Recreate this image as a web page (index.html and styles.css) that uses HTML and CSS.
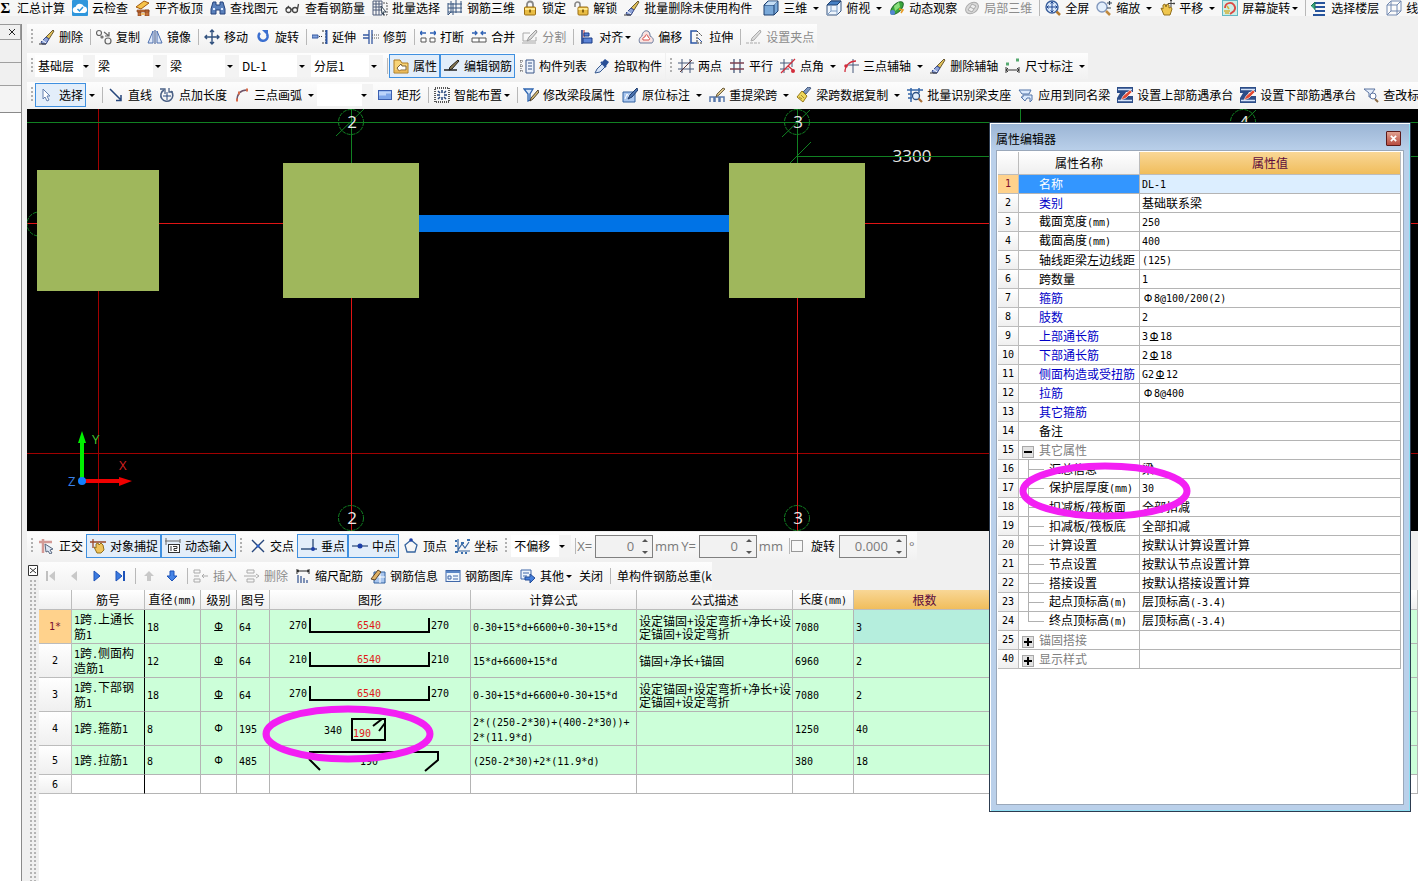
FILE: index.html
```html
<!DOCTYPE html>
<html lang="zh-CN">
<head>
<meta charset="utf-8">
<title>钢筋算量</title>
<link rel="stylesheet" href="styles.css">
</head>
<body>
<svg class="sprite" aria-hidden="true">
  <defs>
    <linearGradient id="g-blue" x1="0" y1="0" x2="1" y2="1"><stop offset="0" stop-color="#c4dcff"/><stop offset="1" stop-color="#3b6fd0"/></linearGradient>
    <linearGradient id="g-gold" x1="0" y1="0" x2="0" y2="1"><stop offset="0" stop-color="#ffe680"/><stop offset="1" stop-color="#c8921c"/></linearGradient>
    <symbol id="i-cloud" viewBox="0 0 16 16"><rect width="16" height="16" rx="1" fill="#2f96dc"/><path d="M4 13a3 3 0 0 1-.5-6A4.500 4.500 0 0 1 12 6.500 3.300 3.300 0 0 1 12.500 13z" fill="#fff"/><path d="M5.500 9l2 2 3.500-4" fill="none" stroke="#2f96dc" stroke-width="1.500"/></symbol>
    <symbol id="i-slab" viewBox="0 0 16 16"><path d="M1 7l8-6 5 2-8 6z" fill="#f6c34a" stroke="#a35a10"/><path d="M2 10h12v2H2zM3 12h3v4H3zM10 10h4v6h-4z" fill="#c4703a" stroke="#803c18" stroke-width=".6"/><path d="M6 13h4v2H6z" fill="#f0c070"/></symbol>
    <symbol id="i-find" viewBox="0 0 16 16"><path d="M3 2h3v3h4V2h3l2 7v5h-5v-4H6v4H1V9z" fill="#5a80bb" stroke="#24427c"/><path d="M3 9h2M11 9h2" stroke="#dce8ff" stroke-width="2"/></symbol>
    <symbol id="i-glasses" viewBox="0 0 16 16"><g fill="none" stroke="#444" stroke-width="1.300"><circle cx="3.500" cy="10" r="2.500"/><circle cx="10" cy="10" r="2.500"/><path d="M6 9.500h1.500M1 9l3-3M12.500 9l1-5"/></g></symbol>
    <symbol id="i-batch" viewBox="0 0 16 16"><path d="M1 1h9v14H1zM1 4h9M1 7h9M1 10h9M4 1v14M7 1v14" fill="none" stroke="#4c5a78"/><path d="M11 3h4v12h-5" fill="none" stroke="#555" stroke-dasharray="2 1"/><path d="M9 6l5 6h-3l1 3-2-2z" fill="#fff" stroke="#345"/></symbol>
    <symbol id="i-frame" viewBox="0 0 16 16"><path d="M4 1v12M9 0v13M14 1v12M1 4h14M1 8h14M1 12h14M1 3v12M1 15l3-3M6 3v12" fill="none" stroke="#36547f"/></symbol>
    <symbol id="i-lock" viewBox="0 0 16 16"><path d="M5 7V4.500a3 3 0 0 1 6 0V7" fill="none" stroke="#888" stroke-width="1.800"/><rect x="2.500" y="7" width="11" height="8" rx="1" fill="#e8bc44" stroke="#9a6c10"/><path d="M3 9h10" stroke="#ffe88c" stroke-width="2"/><path d="M8 9.500v3" stroke="#6a4800" stroke-width="1.500"/></symbol>
    <symbol id="i-unlock" viewBox="0 0 16 16"><path d="M2 7V4.500a2.500 2.500 0 0 1 5 0V8" fill="none" stroke="#888" stroke-width="1.600"/><rect x="5" y="7" width="10" height="8" rx="1" fill="#e8bc44" stroke="#9a6c10"/><path d="M5.500 9h9" stroke="#ffe88c" stroke-width="2"/><path d="M10 9.500v3" stroke="#6a4800" stroke-width="1.500"/></symbol>
    <symbol id="i-eraser" viewBox="0 0 16 16"><path d="M14 1l1 1-5 8-3-2z" fill="#e0c15a" stroke="#6b5a30"/><path d="M7 8l3 2-3 5H3l-1-2z" fill="#8fa4d8" stroke="#3b4d8c"/><path d="M3 11l4 3" stroke="#fff"/><path d="M0 15h7" stroke="#333"/></symbol>
    <symbol id="i-cube" viewBox="0 0 16 16"><path d="M1 5l4-4h10v10l-4 4H1z" fill="#7aa9d9" stroke="#1d3f6e"/><path d="M1 5h10v10M11 5l4-4" fill="none" stroke="#1d3f6e"/><path d="M2 5l3.500-3.500h9L11 5z" fill="#c6def5"/></symbol>
    <symbol id="i-top" viewBox="0 0 16 16"><path d="M1 5l4-4h10v10l-4 4H1z" fill="#eef5fc" stroke="#36547f"/><path d="M1 5l4-4h10l-4 4z" fill="#4680c4" stroke="#1d3f6e"/><path d="M11 5v10M5 5v6h6M5 11l-4 4" fill="none" stroke="#7d9cc4"/></symbol>
    <symbol id="i-orbit" viewBox="0 0 16 16"><ellipse cx="8" cy="8" rx="8" ry="4" transform="rotate(-45 8 8)" fill="#3aa63c" stroke="#226a2b"/><path d="M5 6l5-4 1 5-5 4z" fill="#8ae07a"/><circle cx="3.500" cy="12.500" r="2.500" fill="#5585d2"/><path d="M10 9l4 1-2 3" fill="none" stroke="#e89a20" stroke-width="1.500"/></symbol>
    <symbol id="i-orbit-off" viewBox="0 0 16 16"><ellipse cx="8" cy="8" rx="7" ry="5" transform="rotate(-35 8 8)" fill="#d8d8d8" stroke="#aaa"/><path d="M4 10l4-6 4 2-4 6zM6 7l4 2" fill="#eee" stroke="#aaa"/></symbol>
    <symbol id="i-fit" viewBox="0 0 16 16"><circle cx="7" cy="7" r="6" fill="#dceafc" stroke="#3b5f9c" stroke-width="1.400"/><path d="M7 2v10M2 7h10M5.500 3.500L7 2l1.500 1.500M5.500 10.500L7 12l1.500-1.500M3.500 5.500L2 7l1.500 1.500M10.500 5.500L12 7l-1.500 1.500" fill="none" stroke="#1d4590"/><path d="M11.500 11.500l3.500 3.500" stroke="#b57a30" stroke-width="2.500"/></symbol>
    <symbol id="i-zoom" viewBox="0 0 16 16"><circle cx="6" cy="7" r="5" fill="#e3effc" stroke="#8298bd" stroke-width="1.400"/><path d="M10 11l4 4" stroke="#c08a40" stroke-width="2.500"/><path d="M11 3h5M13.500 1v4M11 8h4" stroke="#345" stroke-width="1.200"/></symbol>
    <symbol id="i-pan" viewBox="0 0 16 16"><path d="M2 8l2 1V5l2-1 1 3 1-3 2 1v3l2-1 1 2-2 6H5z" fill="#efc64e" stroke="#93701c"/><path d="M12 0v7M9 3.500h7M11 1l1-1 1 1M15 2.500l1 1-1 1" fill="none" stroke="#444"/></symbol>
    <symbol id="i-rotview" viewBox="0 0 16 16"><rect x=".5" y=".5" width="15" height="15" fill="#cdeee6" stroke="#62b8c4"/><path d="M3 8a5 5 0 0 1 9-3 5 5 0 0 1 0 6l-4 3" fill="none" stroke="#db4942" stroke-width="1.800"/><path d="M2 11h6M3 13h4M5 6l2 3" stroke="#d2b33c" stroke-width="1.500"/></symbol>
    <symbol id="i-floors" viewBox="0 0 16 16"><path d="M4 3h10M4 7h10M4 11h10M2 15h12" stroke="#27549c" stroke-width="2"/><path d="M0 6l4-4v8" fill="#38a67c" stroke="#1c7252"/></symbol>
    <symbol id="i-wire" viewBox="0 0 16 16"><path d="M1 5l4-4h10v10l-4 4H1zM1 5h10v10M11 5l4-4M5 1v10h10M5 11l-4 4" fill="#fff" fill-opacity=".5" stroke="#7389b0"/></symbol>
    <symbol id="i-copy" viewBox="0 0 16 16"><g fill="none" stroke="#666" stroke-width="1.200"><circle cx="3" cy="4" r="2.500"/><circle cx="12" cy="12" r="3"/><circle cx="6" cy="8" r="1"/><path d="M8 3l5 4M13 3v4H9"/></g></symbol>
    <symbol id="i-mirror" viewBox="0 0 16 16"><path d="M6 2v12H1zM10 2v12h5z" fill="#dfe9f9" stroke="#4c6fae"/><path d="M8 1v14" stroke="#2d4b86"/></symbol>
    <symbol id="i-move" viewBox="0 0 16 16"><path d="M8 1v14M1 8h14M6 3l2-2 2 2M6 13l2 2 2-2M3 6L1 8l2 2M13 6l2 2-2 2" fill="none" stroke="#31517e" stroke-width="1.400"/></symbol>
    <symbol id="i-rotate" viewBox="0 0 16 16"><path d="M5 4a4.500 4.500 0 1 0 7 1" fill="none" stroke="#3b6fd0" stroke-width="2.600"/><path d="M7 1h6v6z" fill="#3b6fd0"/></symbol>
    <symbol id="i-extend" viewBox="0 0 16 16"><path d="M0 6h6v3H0z" fill="#86a5dc" stroke="#3558a0"/><path d="M7 7.500h4" stroke="#333" stroke-dasharray="1 1"/><path d="M10 2h4v12h-4" fill="none" stroke="#333" stroke-dasharray="2 1"/><path d="M14.500 1v14" stroke="#2b55a5" stroke-width="2"/></symbol>
    <symbol id="i-trim" viewBox="0 0 16 16"><path d="M0 6h6M0 9h6M6 1v14M9 1v14" stroke="#3558a0" stroke-width="1.300"/><path d="M9 6h7M9 9h7" stroke="#555" stroke-dasharray="1 1"/></symbol>
    <symbol id="i-break" viewBox="0 0 16 16"><path d="M1 9h5v4H1zM15 9h-5v4h5z" fill="#fff" stroke="#555"/><path d="M0 4h6M2 2L0 4l2 2M10 4h6M14 2l2 2-2 2" fill="none" stroke="#2f62b5" stroke-width="1.300"/></symbol>
    <symbol id="i-join" viewBox="0 0 16 16"><path d="M1 9h14v4H1zM8 9v4" fill="#fff" stroke="#555"/><path d="M1 4h5M4 2l2 2-2 2M10 4h5M12 2l-2 2 2 2" fill="none" stroke="#2f62b5" stroke-width="1.300"/></symbol>
    <symbol id="i-split" viewBox="0 0 16 16"><path d="M1 4h7M1 4v8h13V8M0 14h14" fill="none" stroke="#aaa"/><path d="M14 1l-7 7-2 4 4-2 6-7z" fill="#ddd" stroke="#999"/></symbol>
    <symbol id="i-align" viewBox="0 0 16 16"><path d="M3 1v14" stroke="#193a86" stroke-width="1.500"/><path d="M5 1v7" stroke="#c02828"/><path d="M5 4h5v3H5zM4 9h9v5H4z" fill="#5d84d6" stroke="#193a86"/></symbol>
    <symbol id="i-offset" viewBox="0 0 16 16"><path d="M2 14c-2-3 0-6 2-7 0-4 4-7 7-4 1 1 1 3 1 4 4 2 4 5 2 7z" fill="#f8e2e0" stroke="#66789c"/><path d="M5 11c-1-2 1-3 2-3 0-3 3-3 3 0 2 1 2 2 1 3z" fill="#fff" stroke="#d8504c"/></symbol>
    <symbol id="i-stretch" viewBox="0 0 16 16"><path d="M8 2H2v12h6" fill="none" stroke="#2b55a5" stroke-width="1.500"/><path d="M8 2l5 5M8 14h6M8 5v9" fill="none" stroke="#333" stroke-dasharray="2 1"/><path d="M9 9l4 4" stroke="#2b55a5"/></symbol>
    <symbol id="i-grip-off" viewBox="0 0 16 16"><path d="M14 1l1 2-7 8-3 1 1-3z" fill="#ddd" stroke="#aaa"/><path d="M0 14h14" stroke="#aaa" stroke-dasharray="3 1"/></symbol>
    <symbol id="i-prop" viewBox="0 0 16 16"><path d="M1 2h6l2 3h6v10H1z" fill="#f8d477" stroke="#ad7b22"/><path d="M4 10l4-4 1 2h4v4H8l-2 1z" fill="#fff" stroke="#7b6238"/><path d="M2 13h12" stroke="#e0a040"/></symbol>
    <symbol id="i-rebar" viewBox="0 0 16 16"><path d="M0 12h13" stroke="#222" stroke-width="1.500"/><path d="M14 2l1 1-7 8-3 1 1-3z" fill="#8a7a50" stroke="#222"/></symbol>
    <symbol id="i-list" viewBox="0 0 16 16"><path d="M7 2h8v13H7z" fill="#edf3fc" stroke="#3b5788"/><path d="M9 5h4M9 8h4M9 11h4" stroke="#3b5788"/><path d="M2 2v12M1 3h3M1 8h3M1 13h3" stroke="#555" stroke-dasharray="1 1"/></symbol>
    <symbol id="i-picker" viewBox="0 0 16 16"><path d="M1 15l2-4 6-6 3 3-6 6z" fill="#d6e4f8" stroke="#37598f"/><path d="M8 4l3-3 4 3-3 4z" fill="#284f97"/><path d="M7 4l5 5" stroke="#284f97" stroke-width="2"/></symbol>
    <symbol id="i-two" viewBox="0 0 16 16"><path d="M4 1v14M12 1v14M0 5h16M0 11h16" stroke="#47597a"/><path d="M2 14L14 2" stroke="#5d3434"/></symbol>
    <symbol id="i-par" viewBox="0 0 16 16"><path d="M5 1v14M11 1v14" stroke="#47597a" stroke-width="1.300"/><path d="M1 5h14M1 11h14" stroke="#7c4050" stroke-width="1.300"/></symbol>
    <symbol id="i-ang" viewBox="0 0 16 16"><path d="M4 1v14M12 1v8M0 5h12M0 11h9" stroke="#47597a"/><path d="M1 15L15 1M8 8l6 5" stroke="#d22d3c" stroke-width="1.300"/><circle cx="13" cy="13" r="2" fill="#d22d3c"/></symbol>
    <symbol id="i-arcaxis" viewBox="0 0 16 16"><path d="M10 1v14M4 7h12" stroke="#47597a"/><path d="M2 14C2 7 7 3 13 3" fill="none" stroke="#d22d3c" stroke-width="1.300"/><circle cx="3" cy="8" r="1.800" fill="#d22d3c"/></symbol>
    <symbol id="i-dim" viewBox="0 0 16 16"><path d="M1 9v6M14 9v6M1 12h13M3 10l-2 2 2 2M12 10l2 2-2 2" fill="none" stroke="#333"/><path d="M1 6h3M11 2h3" stroke="#56aa70" stroke-width="3"/></symbol>
    <symbol id="i-cursor" viewBox="0 0 16 16"><path d="M4 2v10l2-2 2 4 2-1-2-4h3z" fill="#fff" stroke="#6480ae"/></symbol>
    <symbol id="i-line" viewBox="0 0 16 16"><path d="M2 2l11 11M13 8v5.500H8" fill="none" stroke="#26467c" stroke-width="1.500"/></symbol>
    <symbol id="i-ptlen" viewBox="0 0 16 16"><path d="M5 3a6 6 0 1 0 7 1" fill="none" stroke="#4b6186" stroke-width="1.600"/><path d="M8 5v8M4 9h8" stroke="#26467c"/><path d="M1 2h5v5M10 1v4h4" fill="none" stroke="#4b6186" stroke-width="1.300"/></symbol>
    <symbol id="i-arc" viewBox="0 0 16 16"><path d="M3 14C3 7 6 3 13 3" fill="none" stroke="#6f5468" stroke-width="1.500"/><path d="M2 13h2M4 6h2M12 3h2" stroke="#d66a4a" stroke-width="3"/></symbol>
    <symbol id="i-rect" viewBox="0 0 16 16"><rect x="1.500" y="3.500" width="13" height="9" fill="#7ea6ea" stroke="#3b5fb0"/><path d="M2 5.500h12M2 7.500h7" stroke="#bcd4fa" stroke-width="2"/></symbol>
    <symbol id="i-smart" viewBox="0 0 16 16"><path d="M1 1h14v14H1z" fill="none" stroke="#222" stroke-width="1.500" stroke-dasharray="1 1"/><path d="M8 3v3M8 10v3M3 8h3M10 8h3M4 4l2 2M12 4l-2 2M4 12l2-2M12 12l-2-2" stroke="#26467c" stroke-width="1.500"/></symbol>
    <symbol id="i-span" viewBox="0 0 16 16"><path d="M1 2h9L7 7v6l-2 1V7z" fill="#d5e7fb" stroke="#2f65b0" stroke-width="1.300"/><path d="M15 3l-7 8-1 3 3-2 6-7z" fill="#d8bc6f" stroke="#4a4234"/></symbol>
    <symbol id="i-note" viewBox="0 0 16 16"><path d="M1 5h12v10H1z" fill="#a9c6ee" stroke="#31609f"/><path d="M3 12l2-5 3 4" fill="none" stroke="#fff"/><path d="M15 1l-7 7-2 4 4-2 6-7z" fill="#4a73b0" stroke="#1f3c6c"/></symbol>
    <symbol id="i-respan" viewBox="0 0 16 16"><path d="M1 15v-5h4v5M6 15v-5h4v5M11 15v-5h4v5" fill="none" stroke="#5878aa" stroke-width="1.500"/><path d="M14 1l-6 6-1 3 3-2 6-6z" fill="#dec98d" stroke="#6f6040"/></symbol>
    <symbol id="i-brush" viewBox="0 0 16 16"><path d="M15 1l-5 6-3-2 5-5z" fill="#7d96bd" stroke="#4b5e82"/><path d="M6 4l5 5-4 6-6-5z" fill="#eed75b" stroke="#977a1a"/><path d="M3 10l3 2M5 8l3 3" stroke="#a58b2c"/></symbol>
    <symbol id="i-ident" viewBox="0 0 16 16"><path d="M0 3h16M1 7h4M4 1v14M12 1v5M1 11h4" stroke="#3566a8" stroke-width="1.500"/><circle cx="9" cy="9" r="3.500" fill="#e3effc" stroke="#2e5183" stroke-width="1.300"/><path d="M11.500 11.500L15 15" stroke="#a96f38" stroke-width="2.200"/></symbol>
    <symbol id="i-apply" viewBox="0 0 16 16"><path d="M1 3h12l-2 4H4z" fill="#dceafc" stroke="#5274a8"/><path d="M7 14l-4-4h2V8h9v5l-2 2v-4H9z" fill="#dceafc" stroke="#5274a8"/></symbol>
    <symbol id="i-cap" viewBox="0 0 16 16"><path d="M0 0h16v5H9L7 9h9v7H0v-5l3-5H0z" fill="#2c4d88"/><path d="M1 2.500h14M1 13.500h14" stroke="#d3e2f8" stroke-width="1.300"/><path d="M13 3l-7 6-2 4 5-2 6-6z" fill="#e24b34" stroke="#fff" stroke-width=".6"/></symbol>
    <symbol id="i-check" viewBox="0 0 16 16"><path d="M1 2h11L9 6v4H6V6z" fill="#e5eefb" stroke="#5d74a0"/><circle cx="10" cy="9" r="3" fill="#fff" stroke="#5d74a0"/><path d="M12 12l3 3" stroke="#8a6a44" stroke-width="2"/></symbol>
    <symbol id="i-ortho" viewBox="0 0 16 16"><path d="M0 4h13M4 1v14" stroke="#d39a96" stroke-width="2.500"/><path d="M6 6l8 5-3 1 2 3-2 1-2-3-2 1z" fill="#dce6f4" stroke="#58677e"/></symbol>
    <symbol id="i-snap" viewBox="0 0 16 16"><path d="M0 4h16M3 1v9" stroke="#9c4a2a" stroke-width="1.300"/><path d="M4 9l2 1V6l2-1 1 2 2-2 2 2 1 5-3 3H7z" fill="#efc35a" stroke="#93701c"/></symbol>
    <symbol id="i-dyn" viewBox="0 0 16 16"><path d="M0 3h15M1 0v7M15 1v4" stroke="#666"/><rect x="3.500" y="6.500" width="11" height="8" fill="#fff" stroke="#333"/><path d="M6 8v5M8 8.500h4v2H9v2h3" fill="none" stroke="#333"/></symbol>
    <symbol id="i-cross" viewBox="0 0 16 16"><path d="M2 2l12 12M14 2L2 14" stroke="#26467c" stroke-width="1.400"/><circle cx="8" cy="8" r="1.500" fill="#285fcd"/></symbol>
    <symbol id="i-perp" viewBox="0 0 16 16"><path d="M0 11h16M12 1v10" stroke="#36547f" stroke-width="1.400"/><circle cx="12" cy="11" r="2" fill="#1d3fa8"/></symbol>
    <symbol id="i-mid" viewBox="0 0 16 16"><path d="M0 8h16" stroke="#36547f" stroke-width="1.300"/><circle cx="8" cy="8" r="2.500" fill="#1d3fa8"/></symbol>
    <symbol id="i-vertex" viewBox="0 0 16 16"><path d="M8 2l6 5-2 7H4L2 7z" fill="none" stroke="#36649f" stroke-width="1.300"/><circle cx="8" cy="2" r="1.800" fill="#1d3fa8"/></symbol>
    <symbol id="i-coord" viewBox="0 0 16 16"><path d="M4 1v12h12M4 12l4-6 3 4 4-6" fill="none" stroke="#36649f" stroke-width="1.200"/><path d="M1 3h2M1 8h2M1 14h3M7 15h2M7 5h3M13 2h3M12 14v2" stroke="#3a6fae" stroke-width="2"/></symbol>
    <symbol id="i-first" viewBox="0 0 16 16"><path d="M4 3v10" stroke="#c0c0c0" stroke-width="2"/><path d="M12 3v10L6 8z" fill="#c8c8c8"/></symbol>
    <symbol id="i-prev" viewBox="0 0 16 16"><path d="M11 3v10L5 8z" fill="#c8c8c8"/></symbol>
    <symbol id="i-next" viewBox="0 0 16 16"><path d="M5 3v10l6-5z" fill="#3b7be0" stroke="#1d52b8"/></symbol>
    <symbol id="i-last" viewBox="0 0 16 16"><path d="M4 3v10l6-5z" fill="#3b7be0" stroke="#1d52b8"/><path d="M12 3v10" stroke="#1d52b8" stroke-width="2"/></symbol>
    <symbol id="i-up" viewBox="0 0 16 16"><path d="M8 3l5 5h-3v5H6V8H3z" fill="#c8c8c8"/></symbol>
    <symbol id="i-down" viewBox="0 0 16 16"><path d="M8 13L3 8h3V3h4v5h3z" fill="#4584e6" stroke="#1d52b8"/></symbol>
    <symbol id="i-ins" viewBox="0 0 16 16"><path d="M1 2h6v3H1zM1 11h6v3H1zM1 8h5M9 8h6M11 6L9 8l2 2" fill="none" stroke="#aaa"/></symbol>
    <symbol id="i-del" viewBox="0 0 16 16"><path d="M3 2h7v3H3zM3 11h7v3H3zM0 8h12M12 6l3 2-3 2" fill="none" stroke="#aaa"/></symbol>
    <symbol id="i-scale" viewBox="0 0 16 16"><path d="M2 1v5M14 1v5M2 3h12M4 2L2 3l2 1M12 2l2 1-2 1" fill="none" stroke="#222"/><path d="M3 7v8M6 8v7M9 10v5M12 12v3" stroke="#3d5b94" stroke-width="1.300"/></symbol>
    <symbol id="i-info" viewBox="0 0 16 16"><path d="M4 4h11v11H4z" fill="#a9c6ee" stroke="#31609f"/><path d="M4 9h11M10 4v11" stroke="#fff"/><path d="M1 11l7-9 3 2-6 8z" fill="#e0b266" stroke="#5b4427"/></symbol>
    <symbol id="i-lib" viewBox="0 0 16 16"><rect x="1" y="2.500" width="14" height="11" fill="#eef5fc" stroke="#3f67a8"/><path d="M1 4h14" stroke="#5a86c6" stroke-width="2"/><path d="M3 8h3v3H3zM8 8h5M8 11h5" fill="none" stroke="#3f67a8"/></symbol>
    <symbol id="i-other" viewBox="0 0 16 16"><path d="M1 2h10v9H1z" fill="#eef5fc" stroke="#3f67a8"/><path d="M3 5h6M3 8h4" stroke="#3f67a8"/><path d="M5 9h5V6l5 4-5 5v-3H5z" fill="#4680dc" stroke="#234c98"/></symbol>
  </defs>
</svg>

<div class="app">
  <div class="row row-top">
    <button class="btn sigma"><b>Σ</b>汇总计算</button>
    <button class="btn"><svg><use href="#i-cloud"/></svg>云检查</button>
    <button class="btn"><svg><use href="#i-slab"/></svg>平齐板顶</button>
    <button class="btn"><svg><use href="#i-find"/></svg>查找图元</button>
    <button class="btn"><svg><use href="#i-glasses"/></svg>查看钢筋量</button>
    <button class="btn"><svg><use href="#i-batch"/></svg>批量选择</button>
    <button class="btn"><svg><use href="#i-frame"/></svg>钢筋三维</button>
    <button class="btn"><svg><use href="#i-lock"/></svg>锁定</button>
    <button class="btn"><svg><use href="#i-unlock"/></svg>解锁</button>
    <button class="btn"><svg><use href="#i-eraser"/></svg>批量删除未使用构件</button>
    <span class="space"></span>
    <button class="btn"><svg><use href="#i-cube"/></svg>三维</button><button class="drop" aria-label="三维选项"></button>
    <button class="btn"><svg><use href="#i-top"/></svg>俯视</button><button class="drop" aria-label="俯视选项"></button>
    <button class="btn"><svg><use href="#i-orbit"/></svg>动态观察</button>
    <button class="btn" disabled><svg><use href="#i-orbit-off"/></svg>局部三维</button>
    <span class="sep"></span>
    <button class="btn"><svg><use href="#i-fit"/></svg>全屏</button>
    <button class="btn"><svg><use href="#i-zoom"/></svg>缩放</button><button class="drop" aria-label="缩放选项"></button>
    <button class="btn"><svg><use href="#i-pan"/></svg>平移</button><button class="drop" aria-label="平移选项"></button>
    <button class="btn menu"><svg><use href="#i-rotview"/></svg>屏幕旋转</button>
    <span class="sep"></span>
    <button class="btn"><svg><use href="#i-floors"/></svg>选择楼层</button>
    <button class="btn"><svg><use href="#i-wire"/></svg>线</button>
  </div>

  <div class="body">
    <aside class="side">
      <div class="side-title"><button class="side-close" aria-label="关闭面板"><svg viewBox="0 0 8 8"><path d="M1 1l6 6M7 1L1 7" stroke="#222" fill="none"/></svg></button></div>
      <div class="side-tab"></div>
      <div class="side-tab"></div>
      <div class="side-head"></div>
      <div class="side-body"></div>
    </aside>

    <main class="main">
      <div class="row">
        <div class="bar">
          <span class="grip"></span>
          <button class="btn"><svg><use href="#i-eraser"/></svg>删除</button>
          <span class="sep"></span>
          <button class="btn"><svg><use href="#i-copy"/></svg>复制</button>
          <button class="btn"><svg><use href="#i-mirror"/></svg>镜像</button>
          <span class="sep"></span>
          <button class="btn"><svg><use href="#i-move"/></svg>移动</button>
          <button class="btn"><svg><use href="#i-rotate"/></svg>旋转</button>
          <span class="sep"></span>
          <button class="btn"><svg><use href="#i-extend"/></svg>延伸</button>
          <button class="btn"><svg><use href="#i-trim"/></svg>修剪</button>
          <span class="sep"></span>
          <button class="btn"><svg><use href="#i-break"/></svg>打断</button>
          <button class="btn"><svg><use href="#i-join"/></svg>合并</button>
          <button class="btn" disabled><svg><use href="#i-split"/></svg>分割</button>
          <span class="sep"></span>
          <button class="btn menu"><svg><use href="#i-align"/></svg>对齐</button>
          <button class="btn"><svg><use href="#i-offset"/></svg>偏移</button>
          <button class="btn"><svg><use href="#i-stretch"/></svg>拉伸</button>
          <span class="sep"></span>
          <button class="btn" disabled><svg><use href="#i-grip-off"/></svg>设置夹点</button>
        </div>
      </div>

      <div class="row">
        <div class="bar">
          <span class="grip"></span>
          <span class="combo short"><select aria-label="楼层"><option>基础层</option></select></span>
          <span class="combo"><select aria-label="构件类别"><option>梁</option></select></span>
          <span class="combo"><select aria-label="构件类型"><option>梁</option></select></span>
          <span class="combo"><select aria-label="构件名称"><option>DL-1</option></select></span>
          <span class="combo"><select aria-label="分层"><option>分层1</option></select></span>
          <span class="sep"></span>
          <button class="btn on"><svg><use href="#i-prop"/></svg>属性</button>
          <button class="btn on"><svg><use href="#i-rebar"/></svg>编辑钢筋</button>
          <button class="btn"><svg><use href="#i-list"/></svg>构件列表</button>
          <button class="btn"><svg><use href="#i-picker"/></svg>拾取构件</button>
        </div>
        <div class="bar">
          <span class="grip"></span>
          <button class="btn"><svg><use href="#i-two"/></svg>两点</button>
          <button class="btn"><svg><use href="#i-par"/></svg>平行</button>
          <button class="btn"><svg><use href="#i-ang"/></svg>点角</button><button class="drop" aria-label="点角选项"></button>
          <button class="btn"><svg><use href="#i-arcaxis"/></svg>三点辅轴</button><button class="drop" aria-label="三点辅轴选项"></button>
          <button class="btn"><svg><use href="#i-eraser"/></svg>删除辅轴</button>
          <button class="btn"><svg><use href="#i-dim"/></svg>尺寸标注</button><button class="drop" aria-label="尺寸标注选项"></button>
        </div>
      </div>

      <div class="row">
        <div class="bar wide">
          <span class="grip"></span>
          <button class="btn on"><svg><use href="#i-cursor"/></svg>选择</button><button class="drop" aria-label="选择选项"></button>
          <span class="sep"></span>
          <button class="btn"><svg><use href="#i-line"/></svg>直线</button>
          <button class="btn"><svg><use href="#i-ptlen"/></svg>点加长度</button>
          <button class="btn"><svg><use href="#i-arc"/></svg>三点画弧</button><button class="drop" aria-label="三点画弧选项"></button>
          <span class="combo tiny"><select aria-label="画弧参数"><option></option></select></span>
          <button class="btn"><svg><use href="#i-rect"/></svg>矩形</button>
          <span class="sep"></span>
          <button class="btn menu"><svg><use href="#i-smart"/></svg>智能布置</button>
          <span class="sep"></span>
          <button class="btn"><svg><use href="#i-span"/></svg>修改梁段属性</button>
          <button class="btn"><svg><use href="#i-note"/></svg>原位标注</button><button class="drop" aria-label="原位标注选项"></button>
          <button class="btn"><svg><use href="#i-respan"/></svg>重提梁跨</button><button class="drop" aria-label="重提梁跨选项"></button>
          <button class="btn"><svg><use href="#i-brush"/></svg>梁跨数据复制</button><button class="drop" aria-label="梁跨数据复制选项"></button>
          <button class="btn"><svg><use href="#i-ident"/></svg>批量识别梁支座</button>
          <button class="btn"><svg><use href="#i-apply"/></svg>应用到同名梁</button>
          <button class="btn"><svg><use href="#i-cap"/></svg>设置上部筋遇承台</button>
          <button class="btn"><svg><use href="#i-cap"/></svg>设置下部筋遇承台</button>
          <button class="btn"><svg><use href="#i-check"/></svg>查改标</button>
        </div>
      </div>

      <svg class="canvas" role="img" aria-label="平面图">
        <g transform="translate(-27 -109)" fill="none">
          <path d="M98.500 109v422M27 453.500h1391" stroke="#a00000"/>
          <path d="M27 223.500h1391M351.500 298v233M797.500 298v233" stroke="#e01414"/>
          <path d="M27 122.500h1391M351.500 109v54M797.500 109v54M797 156.500h621M1020.500 109v14M336 136l28-27M782 137l28-27M1228 137l28-27M790 163l21-21" stroke="#118022"/>
          <g stroke="#118022" stroke-dasharray="4 1"><circle cx="351" cy="122" r="12.500"/><circle cx="797" cy="122" r="12.500"/><circle cx="1243" cy="122" r="12.500"/><circle cx="351" cy="518" r="12.500"/><circle cx="797" cy="518" r="12.500"/><circle cx="39" cy="224" r="12"/></g>
          <g fill="#9fb75c"><path d="M37 170h122v121H37zM283 163h136v135H283zM729 163h136v135H729z"/></g>
          <path d="M419 215h310v17H419z" fill="#0073e6"/>
          <g class="axis-no"><text x="352" y="128">2</text><text x="798" y="128">3</text><text x="1244" y="128">4</text><text x="352" y="524">2</text><text x="798" y="524">3</text></g>
          <text class="dim-no" x="912" y="162">3300</text>
          <path d="M892 156.500h42" stroke="#118022"/>
          <path d="M82 481v-42" stroke="#00f000" stroke-width="4"/><path d="M78 443l4-12 4 12z" fill="#00f000"/>
          <path d="M82 481h40" stroke="#f00000" stroke-width="4"/><path d="M119 477l13 4-13 5z" fill="#f00000"/>
          <circle cx="82" cy="481" r="4" fill="#1280ff"/>
          <g class="ucs"><text x="92" y="444" fill="#49c832">Y</text><text x="119" y="470" fill="#d42020">X</text><text x="68" y="486" fill="#3a80e8">Z</text></g>
        </g>
      </svg>

      <div class="row row-snap">
        <div class="bar">
          <span class="grip"></span>
          <button class="btn"><svg><use href="#i-ortho"/></svg>正交</button>
          <button class="btn on"><svg><use href="#i-snap"/></svg>对象捕捉</button>
          <button class="btn on"><svg><use href="#i-dyn"/></svg>动态输入</button>
          <span class="grip inner"></span>
          <button class="btn"><svg><use href="#i-cross"/></svg>交点</button>
          <button class="btn on"><svg><use href="#i-perp"/></svg>垂点</button>
          <button class="btn on"><svg><use href="#i-mid"/></svg>中点</button>
          <button class="btn"><svg><use href="#i-vertex"/></svg>顶点</button>
          <button class="btn"><svg><use href="#i-coord"/></svg>坐标</button>
          <span class="grip inner"></span>
          <span class="combo short"><select aria-label="偏移方式"><option>不偏移</option></select></span>
          <span class="sep"></span>
          <label class="field" for="off-x">X=</label><span class="spin"><input id="off-x" value="0" disabled></span><span class="unit">mm</span>
          <label class="field" for="off-y">Y=</label><span class="spin"><input id="off-y" value="0" disabled></span><span class="unit">mm</span>
          <span class="sep"></span>
          <input type="checkbox" id="rot" class="tick"><label class="rot" for="rot">旋转</label>
          <span class="spin long"><input aria-label="旋转角度" value="0.000" disabled></span><span class="unit">°</span>
        </div>
      </div>

      <section class="rebar">
        <div class="rail"><button class="rail-close" aria-label="关闭钢筋编辑"><svg viewBox="0 0 10 11"><path d="M.5.5h9v10h-9zM2 3l6 5M8 3L2 8" fill="#fff" stroke="#333"/></svg></button><div class="dots"></div></div>
        <div class="pane">
          <div class="row row-edit">
            <div class="bar">
              <button class="btn" aria-label="首条" disabled><svg><use href="#i-first"/></svg></button>
              <button class="btn" aria-label="上一条" disabled><svg><use href="#i-prev"/></svg></button>
              <button class="btn" aria-label="下一条"><svg><use href="#i-next"/></svg></button>
              <button class="btn" aria-label="末条"><svg><use href="#i-last"/></svg></button>
              <span class="sep"></span>
              <button class="btn" aria-label="上移" disabled><svg><use href="#i-up"/></svg></button>
              <button class="btn" aria-label="下移"><svg><use href="#i-down"/></svg></button>
              <span class="sep"></span>
              <button class="btn" disabled><svg><use href="#i-ins"/></svg>插入</button>
              <button class="btn" disabled><svg><use href="#i-del"/></svg>删除</button>
              <button class="btn"><svg><use href="#i-scale"/></svg>缩尺配筋</button>
              <button class="btn"><svg><use href="#i-info"/></svg>钢筋信息</button>
              <button class="btn"><svg><use href="#i-lib"/></svg>钢筋图库</button>
              <button class="btn menu"><svg><use href="#i-other"/></svg>其他</button>
              <button class="btn">关闭</button>
              <span class="sep"></span>
              <span class="total">单构件钢筋总重(k</span>
            </div>
          </div>
          <table class="grid">
            <colgroup><col class="c-no"><col class="c-name"><col class="c-dia"><col class="c-lv"><col class="c-fig"><col class="c-shape"><col class="c-formula"><col class="c-desc"><col class="c-len"><col class="c-count"><col></colgroup>
            <thead><tr><th></th><th>筋号</th><th>直径<i>(mm)</i></th><th>级别</th><th>图号</th><th>图形</th><th>计算公式</th><th>公式描述</th><th>长度<i>(mm)</i></th><th class="hot">根数</th><th></th></tr></thead>
            <tbody>
              <tr><th class="cur">1*</th><td><i>1</i>跨<i>.</i>上通长<br>筋<i>1</i></td><td><i>18</i></td><td class="mid"><u>Ф</u></td><td><i>64</i></td>
                <td class="shape"><svg><path d="M40 8v14h119V8"/><text x="19" y="19">270</text><text class="red" x="87" y="19">6540</text><text x="161" y="19">270</text></svg></td>
                <td><i>0-30+15*d+6600+0-30+15*d</i></td><td>设定锚固+设定弯折+净长+设<br>定锚固+设定弯折</td><td><i>7080</i></td><td class="pick"><i>3</i></td><td></td></tr>
              <tr><th>2</th><td><i>1</i>跨<i>.</i>侧面构<br>造筋<i>1</i></td><td><i>12</i></td><td class="mid"><u>Ф</u></td><td><i>64</i></td>
                <td class="shape"><svg><path d="M40 8v14h119V8"/><text x="19" y="19">210</text><text class="red" x="87" y="19">6540</text><text x="161" y="19">210</text></svg></td>
                <td><i>15*d+6600+15*d</i></td><td>锚固+净长+锚固</td><td><i>6960</i></td><td><i>2</i></td><td></td></tr>
              <tr><th>3</th><td><i>1</i>跨<i>.</i>下部钢<br>筋<i>1</i></td><td><i>18</i></td><td class="mid"><u>Ф</u></td><td><i>64</i></td>
                <td class="shape"><svg><path d="M40 8v14h119V8"/><text x="19" y="19">270</text><text class="red" x="87" y="19">6540</text><text x="161" y="19">270</text></svg></td>
                <td><i>0-30+15*d+6600+0-30+15*d</i></td><td>设定锚固+设定弯折+净长+设<br>定锚固+设定弯折</td><td><i>7080</i></td><td><i>2</i></td><td></td></tr>
              <tr><th>4</th><td><i>1</i>跨<i>.</i>箍筋<i>1</i></td><td><i>8</i></td><td class="mid">Ф</td><td><i>195</i></td>
                <td class="shape"><svg><path d="M82 7h33v21H82zM103 14l9-7M109 19l6-8"/><text x="54" y="22">340</text><text class="red" x="83" y="25">190</text></svg></td>
                <td><i>2*((250-2*30)+(400-2*30))+<br>2*(11.9*d)</i></td><td></td><td><i>1250</i></td><td><i>40</i></td><td></td></tr>
              <tr class="low"><th>5</th><td><i>1</i>跨<i>.</i>拉筋<i>1</i></td><td><i>8</i></td><td class="mid">Ф</td><td><i>485</i></td>
                <td class="shape"><svg><path d="M50 24L39 13M39 6h129v8l-13 11"/><text x="90" y="19">190</text></svg></td>
                <td><i>(250-2*30)+2*(11.9*d)</i></td><td></td><td><i>380</i></td><td><i>18</i></td><td></td></tr>
              <tr class="blank"><th>6</th><td></td><td></td><td></td><td></td><td></td><td></td><td></td><td></td><td></td><td></td></tr>
            </tbody>
          </table>
        </div>
      </section>
    </main>
  </div>

  <section class="dialog" aria-label="属性编辑器">
    <header><h2>属性编辑器</h2><button class="dlg-close" aria-label="关闭"><svg viewBox="0 0 8 8"><path d="M1 1l6 6M7 1L1 7" stroke="#fff" stroke-width="2"/></svg></button></header>
    <div class="sheet">
      <table class="props">
        <colgroup><col class="p-no"><col class="p-name"><col></colgroup>
        <thead><tr><th></th><th>属性名称</th><th class="hot">属性值</th></tr></thead>
        <tbody>
          <tr class="sel"><th class="cur">1</th><td>名称</td><td><i>DL-1</i></td></tr>
          <tr><th>2</th><td class="key">类别</td><td>基础联系梁</td></tr>
          <tr><th>3</th><td>截面宽度<i>(mm)</i></td><td><i>250</i></td></tr>
          <tr><th>4</th><td>截面高度<i>(mm)</i></td><td><i>400</i></td></tr>
          <tr><th>5</th><td>轴线距梁左边线距</td><td><i>(125)</i></td></tr>
          <tr><th>6</th><td>跨数量</td><td><i>1</i></td></tr>
          <tr><th>7</th><td class="key">箍筋</td><td><b>Ф</b><i>8@100/200(2)</i></td></tr>
          <tr><th>8</th><td class="key">肢数</td><td><i>2</i></td></tr>
          <tr><th>9</th><td class="key">上部通长筋</td><td><i>3</i><b><u>Ф</u></b><i>18</i></td></tr>
          <tr><th>10</th><td class="key">下部通长筋</td><td><i>2</i><b><u>Ф</u></b><i>18</i></td></tr>
          <tr><th>11</th><td class="key">侧面构造或受扭筋</td><td><i>G2</i><b><u>Ф</u></b><i>12</i></td></tr>
          <tr><th>12</th><td class="key">拉筋</td><td><b>Ф</b><i>8@400</i></td></tr>
          <tr><th>13</th><td class="key">其它箍筋</td><td></td></tr>
          <tr><th>14</th><td>备注</td><td></td></tr>
          <tr><th>15</th><td class="group"><button class="fold open" aria-label="折叠"></button>其它属性</td><td></td></tr>
          <tr><th>16</th><td class="leaf">汇总信息</td><td>梁</td></tr>
          <tr><th>17</th><td class="leaf">保护层厚度<i>(mm)</i></td><td><i>30</i></td></tr>
          <tr><th>18</th><td class="leaf">扣减板/筏板面</td><td>全部扣减</td></tr>
          <tr><th>19</th><td class="leaf">扣减板/筏板底</td><td>全部扣减</td></tr>
          <tr><th>20</th><td class="leaf">计算设置</td><td>按默认计算设置计算</td></tr>
          <tr><th>21</th><td class="leaf">节点设置</td><td>按默认节点设置计算</td></tr>
          <tr><th>22</th><td class="leaf">搭接设置</td><td>按默认搭接设置计算</td></tr>
          <tr><th>23</th><td class="leaf">起点顶标高<i>(m)</i></td><td>层顶标高<i>(-3.4)</i></td></tr>
          <tr><th>24</th><td class="leaf last">终点顶标高<i>(m)</i></td><td>层顶标高<i>(-3.4)</i></td></tr>
          <tr><th>25</th><td class="group"><button class="fold" aria-label="展开"></button>锚固搭接</td><td></td></tr>
          <tr><th>40</th><td class="group"><button class="fold" aria-label="展开"></button>显示样式</td><td></td></tr>
        </tbody>
      </table>
    </div>
  </section>

  <svg class="ring ring-cover" viewBox="0 0 172 58" aria-hidden="true"><ellipse cx="86" cy="29" rx="82" ry="25"/></svg>
  <svg class="ring ring-stirrup" viewBox="0 0 172 58" aria-hidden="true"><ellipse cx="86" cy="29" rx="82" ry="25"/></svg>
</div>
</body>
</html>
```

FILE: styles.css
```css
* { box-sizing: border-box; }

html, body { height: 100%; }

body {
  margin: 0;
  overflow: hidden;
  background: #f0f0f0;
  color: #000;
  font: 12px/16px "Noto Sans CJK SC", sans-serif;
}

button, select, input { font: inherit; color: inherit; }
button { margin: 0; padding: 0; border: 0; background: none; }
i, b, u { font-style: normal; font-weight: 400; }

.sprite { position: absolute; width: 0; height: 0; }

.app {
  position: relative;
  display: flex;
  flex-direction: column;
  height: 100%;
  overflow: hidden;
}

/* Toolbars */
.row {
  display: flex;
  gap: 1px;
  height: 26px;
  margin-bottom: 3px;
  flex: none;
}

.row-top {
  gap: 0;
  height: 16px;
  margin: 0 0 8px;
  align-items: center;
  overflow: hidden;
  background: #f7f7f7;
}

.bar {
  display: flex;
  align-items: center;
  flex: none;
  background: linear-gradient(#fdfdfd, #f1f1f1);
}

.wide { flex: 1 0 auto; }

.btn {
  display: flex;
  align-items: center;
  gap: 4px;
  flex: none;
  height: 24px;
  padding: 0 2px 0 3px;
  border: 1px solid transparent;
  white-space: nowrap;
}

.btn svg { width: 16px; height: 16px; flex: none; }
.btn:disabled { color: #8c8c8c; }
.btn.on { border-color: #3f90e0; background: #e3eefa; }

.sigma { padding-left: 0; border-left: 0; gap: 6px; }
.sigma b { width: 11px; font: bold 15px/16px "Liberation Serif", serif; }

.drop { width: 12px; height: 24px; flex: none; }

.drop::after, .menu::after, .combo::after {
  content: "";
  display: block;
  width: 0;
  margin: auto;
  border: 3px solid transparent;
  border-top-color: #000;
  border-bottom: 0;
}

.menu::after { margin: 0 0 0 -2px; }

.sep { width: 6px; height: 16px; flex: none; }
.sep::after {
  content: "";
  display: block;
  width: 1px;
  height: 16px;
  margin-left: 4px;
  background: #b8b8b8;
}

.space { width: 4px; flex: none; }

.grip { width: 8px; height: 16px; flex: none; }
.grip.inner { width: 10px; }
.grip::after {
  content: "";
  display: block;
  width: 2px;
  height: 16px;
  margin-left: 4px;
  background: repeating-linear-gradient(#b0b0b0 0 2px, transparent 2px 4px);
}

.combo {
  display: flex;
  align-items: center;
  width: 72px;
  height: 22px;
  flex: none;
  background: linear-gradient(90deg, #fff 80%, #f3f3f3 80%);
}

.combo.short { width: 60px; }
.combo.tiny { width: 56px; }

.combo select {
  width: 44px;
  height: 22px;
  flex: 1;
  padding: 0 0 0 3px;
  border: 0;
  background: none;
  appearance: none;
}

.combo::after { margin: 0 6px 0 0; }

/* Page body */
.body { display: flex; flex: 1; min-height: 0; }

.side {
  display: flex;
  flex-direction: column;
  width: 22px;
  margin-right: 5px;
  flex: none;
  border-right: 1px solid #8a8a8a;
}

.side-title {
  display: flex;
  justify-content: flex-end;
  align-items: center;
  height: 16px;
  padding-right: 4px;
  border: 1px solid #9a9a9a;
  border-left: 0;
}

.side-close { display: flex; }
.side-close svg { width: 8px; height: 8px; }
.side-tab { height: 23px; border-bottom: 1px solid #a0a0a0; }
.side-head { height: 27px; border-bottom: 1px solid #8a8a8a; background: #f4f4f4; }
.side-body { flex: 1; background: #fff; }

.main {
  display: flex;
  flex-direction: column;
  flex: 1;
  min-width: 0;
  overflow: hidden;
}

.canvas {
  display: block;
  width: 100%;
  height: 422px;
  margin-top: -2px;
  flex: none;
  background: #000;
}

.axis-no, .dim-no { fill: #e8e8e8; font: 17px "Open Sans", sans-serif; text-anchor: middle; }
.ucs { font: 13px "Open Sans", sans-serif; }

.row-snap { height: 28px; margin: 1px 0 2px; }

.field, .unit { color: #7a7a7a; font: 13px/16px "Open Sans", sans-serif; }
.field { padding: 0 3px 0 0; }
.unit { padding: 0 2px; }

.spin {
  display: flex;
  position: relative;
  width: 58px;
  height: 23px;
  flex: none;
  border: 1px solid #808080;
  background: #f2f2f2;
}

.spin.long { width: 68px; }

.spin input {
  width: 100%;
  padding: 0 18px 0 0;
  border: 0;
  background: none;
  color: #7a7a7a;
  font: 13px/20px "Open Sans", sans-serif;
  text-align: right;
}

.spin::before, .spin::after {
  content: "";
  position: absolute;
  right: 4px;
  border: 3px solid transparent;
}

.spin::before { top: 3px; border-top: 0; border-bottom-color: #555; }
.spin::after { bottom: 3px; border-bottom: 0; border-top-color: #555; }

.tick {
  width: 12px;
  height: 12px;
  margin: 0 8px 0 0;
  appearance: none;
  border: 1px solid #999;
  background: #f7f7f7;
}

.rot { padding-right: 4px; }

/* Rebar editor */
.rebar { display: flex; flex: 1; min-height: 0; }

.rail {
  display: flex;
  flex-direction: column;
  width: 12px;
  padding: 3px 0 0 1px;
  flex: none;
}

.rail-close { display: flex; }
.rail-close svg { width: 10px; height: 11px; }

.dots {
  flex: 1;
  margin: 3px 3px 0 1px;
  background: radial-gradient(circle at 2px 2px, #b4b4b4 1px, transparent 1px) 0 0 / 4px 4px;
}

.pane { flex: 1; min-width: 0; background: #fff; }
.row-edit { height: 28px; margin: 0; background: #f0f0f0; }
.total { padding-left: 5px; }

table { border-collapse: separate; border-spacing: 0; table-layout: fixed; width: 100%; }

.grid i, .props i, .grid tbody th, .props tbody th, .shape text {
  font-family: "DejaVu Sans Mono", monospace;
  font-size: 10px;
}

th {
  padding: 0;
  border-right: 1px solid #bcbcbc;
  border-bottom: 1px solid #bcbcbc;
  background: linear-gradient(#fff, #efefef);
  font-weight: 400;
  text-align: center;
  white-space: nowrap;
}

td {
  padding: 0 0 0 2px;
  border-right: 1px solid #b4b4b4;
  border-bottom: 1px solid #b4b4b4;
  overflow: hidden;
  white-space: nowrap;
}

.hot { background: linear-gradient(#f9d796, #f0bd5c); color: #5c0a3c; }
th.cur { background: #ffd28c; color: #7a1030; }

.grid { line-height: 13px; }
.grid thead th { height: 20px; }
.grid td { height: 34px; background: #ccffd9; }
.grid .low td { height: 29px; }
.grid .blank td { height: 19px; background: #fff; }
.grid td:nth-child(2) { border-right-color: #000; }
.grid td.mid { padding: 0; text-align: center; }
.grid td.pick { background: #b5eedd; }
.grid td.shape { padding: 0; }

.mid, .props b { font-family: "DejaVu Sans", sans-serif; font-size: 10px; }
u { text-underline-offset: 0; }

.c-no { width: 33px; }
.c-name { width: 73px; }
.c-dia { width: 56px; }
.c-lv { width: 36px; }
.c-fig { width: 33px; }
.c-shape { width: 201px; }
.c-formula { width: 166px; }
.c-desc { width: 156px; }
.c-len { width: 61px; }
.c-count { width: 142px; }

.shape svg { display: block; width: 200px; height: 33px; }
.low .shape svg { height: 28px; }
.shape path { fill: none; stroke: #000; stroke-width: 2; }
.shape .red { fill: #e01818; }

/* Property dialog */
.dialog {
  position: absolute;
  top: 122px;
  right: 7px;
  display: flex;
  flex-direction: column;
  width: 422px;
  height: 690px;
  padding: 0 6px 6px;
  border: 1px solid #2d3c50;
  background: linear-gradient(#9ab4d4, #bad0ea 28px);
  box-shadow: inset 1px 1px 0 #fff, inset -1px -1px 0 #8fe0f4;
}

.dialog header {
  display: flex;
  align-items: center;
  justify-content: space-between;
  height: 27px;
  padding: 4px 3px 0 0;
  flex: none;
}

.dialog h2 { margin: 0; font-size: 12px; font-weight: 400; }

.dlg-close {
  display: flex;
  align-items: center;
  justify-content: center;
  width: 15px;
  height: 15px;
  border: 1px solid #5c1a1a;
  border-radius: 1px;
  background: linear-gradient(#e0a090, #b84c40);
}

.dlg-close svg { width: 7px; height: 7px; }

.sheet {
  flex: 1;
  padding: 1px 2px 0 1px;
  border: 1px solid #9aa8ba;
  background: #fff;
}

.props { line-height: 16px; }
.props thead th { height: 23px; }
.props td { height: 19px; }
.props td:nth-child(2) { padding-left: 20px; }
.p-no { width: 21px; }
.p-name { width: 121px; }

.props .key { color: #0000c8; }
.props .group { color: #808080; }
.sel td { background: #dceeff; }
.sel td:nth-child(2) { background: #3396ff; color: #fff; }
.props b { display: inline-block; width: 12px; text-align: center; }

.props td.group { padding-left: 3px; }

.fold {
  display: inline-block;
  width: 12px;
  height: 12px;
  margin-right: 5px;
  border: 1px solid #a8a8a8;
  vertical-align: -2px;
  background:
    linear-gradient(#000, #000) center / 8px 2px no-repeat,
    linear-gradient(#000, #000) center / 2px 8px no-repeat,
    #e2e2e2;
}

.fold.open { background: linear-gradient(#000, #000) center / 8px 2px no-repeat, #e2e2e2; }

.props td.leaf {
  padding-left: 30px;
  background:
    linear-gradient(#b0b0b0, #b0b0b0) 9px 0 / 1px 100% no-repeat,
    linear-gradient(#b0b0b0, #b0b0b0) 9px 9px / 16px 1px no-repeat;
}

.props td.last {
  background:
    linear-gradient(#b0b0b0, #b0b0b0) 9px 0 / 1px 9px no-repeat,
    linear-gradient(#b0b0b0, #b0b0b0) 9px 9px / 16px 1px no-repeat;
}

/* Highlight rings drawn over the content */
.ring {
  position: absolute;
  width: 172px;
  height: 58px;
  pointer-events: none;
}

.ring ellipse { fill: none; stroke: #f31ff3; stroke-width: 7; }
.ring-cover { top: 462px; right: 227px; }
.ring-stirrup { top: 705px; left: 262px; }
```
